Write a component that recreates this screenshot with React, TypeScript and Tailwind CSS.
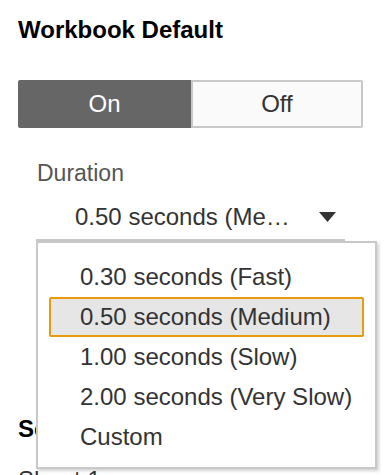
const durations = [
  '0.30 seconds (Fast)',
  '0.50 seconds (Medium)',
  '1.00 seconds (Slow)',
  '2.00 seconds (Very Slow)',
  'Custom',
];

function ToggleGroup() {
  return (
    <div className="ml-[18px] mt-[38px] flex h-[48px] w-[345px] text-[24px]">
      <div className="flex w-[173px] items-center justify-center rounded-l-[2px] bg-[#666666] text-white">On</div>
      <div className="flex flex-1 items-center justify-center rounded-r-[2px] border-2 border-[#c8c8c8] bg-[#fafafa] text-[#333333]">
        Off
      </div>
    </div>
  );
}

function DurationMenu({ selected }: { selected: number }) {
  return (
    <div className="absolute left-[36px] top-[241px] h-[228px] w-[341px] border-2 border-[#c8c8c8] bg-white pt-[14px] shadow-[2px_2px_3px_rgba(0,0,0,0.18)]">
      {durations.map((label, i) => (
        <div
          key={label}
          className={`mx-[11px] flex h-[40px] items-center rounded-[2px] border-2 pl-[29px] text-[24px] leading-[24px] text-[#333333] ${
            i === selected ? 'border-[#e89b0c] bg-[#e6e6e6]' : 'border-transparent'
          }`}
        >
          {label}
        </div>
      ))}
    </div>
  );
}

export default function App() {
  return (
    <div className="relative h-[475px] w-[391px] overflow-hidden bg-white font-['Liberation_Sans',Arial,sans-serif]">
      <div className="pl-[18px] pt-[18px] text-[24px] font-bold leading-[24px] text-black">Workbook Default</div>

      <ToggleGroup />

      <div className="mt-[33px] pl-[37px] text-[23px] leading-[24px] text-[#555555]">Duration</div>

      <div className="ml-[36px] mt-[10px] flex w-[309px] items-center border-b-2 border-[#c8c8c8] py-[10px] pl-[39px] text-[24px] leading-[24px] text-[#333333]">
        <span>0.50 seconds (Me…</span>
        <svg className="ml-auto mr-[9px]" width="17" height="10" viewBox="0 0 17 10">
          <path d="M0 0 H17 L8.5 10 Z" fill="#333333" />
        </svg>
      </div>

      {/* space covered by the open menu */}
      <div className="h-[176px]" />

      <div className="pl-[18px] text-[24px] font-bold leading-[24px] text-black">Selected Sheet</div>
      <div className="mt-[27px] pl-[18px] text-[24px] leading-[24px] text-[#333333]">Sheet 1</div>

      <DurationMenu selected={1} />
    </div>
  );
}
